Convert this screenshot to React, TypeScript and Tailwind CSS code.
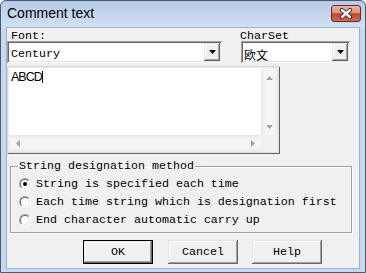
import React from "react";

const raised =
  "shadow-[inset_-1px_-1px_0_#696969,inset_1px_1px_0_#e3e3e3,inset_-2px_-2px_0_#a0a0a0,inset_2px_2px_0_#ffffff]";
const sunken =
  "shadow-[inset_1px_1px_0_#a0a0a0,inset_-1px_-1px_0_#ffffff,inset_2px_2px_0_#696969,inset_-2px_-2px_0_#e3e3e3]";

function DownArrow({ color = "#000" }: { color?: string }) {
  return (
    <svg width="7" height="4" viewBox="0 0 7 4">
      <path d="M0 0H7L3.5 4Z" fill={color} />
    </svg>
  );
}

function Combo({ width, children, textCls }: { width: number; children: React.ReactNode; textCls?: string }) {
  return (
    <div className={`h-[22px] p-[2px] bg-white flex ${sunken}`} style={{ width }}>
      <div className={`flex-1 leading-[22px] whitespace-nowrap ${textCls ?? "pl-[2px]"}`}>{children}</div>
      <div className={`w-[16px] h-[18px] bg-[#f0f0f0] flex items-center justify-center ${raised}`}>
        <DownArrow />
      </div>
    </div>
  );
}

function Radio({ checked }: { checked?: boolean }) {
  return (
    <div className="w-[12px] h-[12px] rounded-full border border-t-[#a0a0a0] border-l-[#a0a0a0] border-r-white border-b-white">
      <div className="w-full h-full rounded-full border border-t-[#696969] border-l-[#696969] border-r-[#e3e3e3] border-b-[#e3e3e3] bg-white flex items-center justify-center">
        {checked && <div className="w-[4px] h-[4px] rounded-full bg-black" />}
      </div>
    </div>
  );
}

function Button({ label, def }: { label: string; def?: boolean }) {
  return (
    <div className={`w-[70px] h-[24px] ${def ? "border border-black" : ""}`}>
      <div className={`w-full h-full bg-[#f0f0f0] flex items-center justify-center leading-[13px] ${raised}`}>
        {label}
      </div>
    </div>
  );
}

export default function App() {
  return (
    <div className="w-[366px] h-[273px] relative rounded-t-[6px] border border-[#4a5a70] bg-[linear-gradient(to_bottom,#b5cbe6_0px,#d2e2f3_27px,#c6d9ee_27px,#c6d9ee_100%)] flex flex-col font-['Liberation_Mono',monospace] text-[11.67px] text-black">
      <div className="h-[27px] leading-[24px] pl-[6px] text-[14px] font-['Liberation_Sans',Arial,sans-serif]">
        Comment text
      </div>
      <div className="absolute left-[330px] top-[4px] w-[30px] h-[17px] rounded-[3px] border border-[#6a2a20] bg-[linear-gradient(to_bottom,#eab3a5_0%,#dc9282_45%,#c4442c_52%,#d06a53_100%)] flex items-center justify-center">
        <svg width="14" height="11" viewBox="0 0 14 11">
          <path d="M3 2L11 9M11 2L3 9" stroke="#3a2420" strokeWidth="4.2" strokeLinecap="round" />
          <path d="M3 2L11 9M11 2L3 9" stroke="#ffffff" strokeWidth="2.4" strokeLinecap="round" />
        </svg>
      </div>

      <div className="ml-[6px] w-[352px] h-[240px] bg-[#f0f0f0] flex flex-col shadow-[0_0_0_1px_#9db2cc]">
        <div className="flex">
          <div className="w-[215px] flex flex-col">
            <div className="h-[13px] leading-[16px] pl-[4px]">Font:</div>
            <Combo width={215}>Century</Combo>
          </div>
          <div className="ml-[19px] w-[109px] flex flex-col">
            <div className="h-[13px] leading-[16px] -ml-px">CharSet</div>
            <Combo width={109} textCls="pl-[1px] leading-[24px] text-[12px] font-['Noto_Sans_CJK_JP',sans-serif]">
              欧文
            </Combo>
          </div>
        </div>

        <div className="mt-[3px] w-[273px] h-[88px] p-[2px] flex flex-col shadow-[inset_1px_1px_0_#d6d6d6,inset_-1px_-1px_0_#646464,inset_2px_2px_0_#ebebeb,inset_-2px_-2px_0_#e0e0e0]">
          <div className="flex h-[67px]">
            <div className="flex-1 bg-white">
              <div className="flex pt-[2px] pl-[2px]">
                <span className="leading-[14px] text-[12.5px] tracking-[-1px] font-['Liberation_Sans',Arial,sans-serif]">ABCD</span>
                <span className="w-px h-[12px] bg-black mt-[1px]" />
              </div>
            </div>
            <div className="w-[17px] flex flex-col justify-between bg-[linear-gradient(to_right,#e6e6e6,#f5f5f5_25%,#f5f5f5_75%,#e9e9e9)]">
              <div className="h-[17px] flex items-center justify-center pt-[3px]">
                <svg width="7" height="4" viewBox="0 0 7 4">
                  <path d="M0 4H7L3.5 0Z" fill="#a3a3a3" />
                </svg>
              </div>
              <div className="h-[17px] flex items-center justify-center">
                <DownArrow color="#a3a3a3" />
              </div>
            </div>
          </div>
          <div className="flex h-[17px]">
            <div className="flex-1 flex justify-between items-center bg-[linear-gradient(to_bottom,#e6e6e6,#f5f5f5_25%,#f5f5f5_75%,#e9e9e9)]">
              <div className="w-[17px] flex justify-center">
                <svg width="4" height="7" viewBox="0 0 4 7">
                  <path d="M4 0V7L0 3.5Z" fill="#a3a3a3" />
                </svg>
              </div>
              <div className="w-[17px] flex justify-center">
                <svg width="4" height="7" viewBox="0 0 4 7">
                  <path d="M0 0V7L4 3.5Z" fill="#a3a3a3" />
                </svg>
              </div>
            </div>
            <div className="w-[17px] bg-[#f0f0f0]" />
          </div>
        </div>

        <fieldset className="mt-[6px] ml-[3px] w-[342px] h-[73px] border border-[#a0a0a0] shadow-[inset_1px_1px_0_#ffffff,1px_1px_0_#ffffff] p-0 m-0 min-w-0">
          <legend className="ml-[7px] px-[1px] leading-[13px]">String designation method</legend>
          <div className="pt-[2px] flex flex-col">
            <div className="h-[18px] flex items-center pl-[8px]">
              <Radio checked />
              <span className="ml-[5px] leading-[18px]">String is specified each time</span>
            </div>
            <div className="h-[18px] flex items-center pl-[8px]">
              <Radio />
              <span className="ml-[5px] leading-[18px]">Each time string which is designation first</span>
            </div>
            <div className="h-[18px] flex items-center pl-[8px]">
              <Radio />
              <span className="ml-[5px] leading-[18px]">End character automatic carry up</span>
            </div>
          </div>
        </fieldset>

        <div className="mt-[7px] ml-[76px] flex">
          <Button label="OK" def />
          <div className="ml-[15px]">
            <Button label="Cancel" />
          </div>
          <div className="ml-[14px]">
            <Button label="Help" />
          </div>
        </div>
      </div>
    </div>
  );
}
